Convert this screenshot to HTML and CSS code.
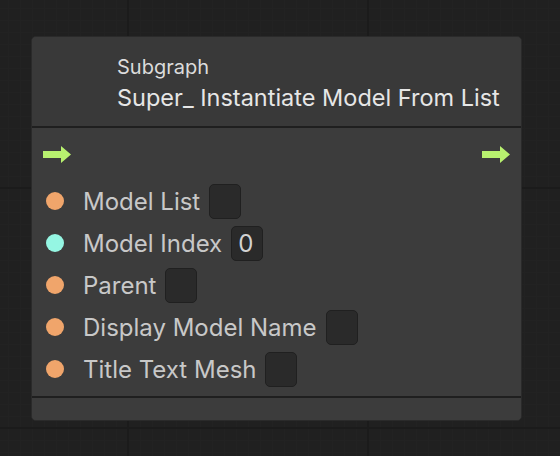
FILE: index.html
```html
<!DOCTYPE html>
<html>
<head>
<meta charset="utf-8">
<link rel="stylesheet" href="styles.css">
</head>
<body>
<div class="canvas">
  <div class="node">
    <div class="header">
      <div class="kind">Subgraph</div>
      <div class="title">Super_ Instantiate Model From List</div>
    </div>
    <div class="sep"></div>
    <div class="body">
      <div class="flow">
        <svg class="arrow" width="28" height="17" viewBox="0 0 28 17"><polygon points="0,5 18,5 18,0 28,8.5 18,17 18,12 0,12"/></svg>
        <svg class="arrow" width="28" height="17" viewBox="0 0 28 17"><polygon points="0,5 18,5 18,0 28,8.5 18,17 18,12 0,12"/></svg>
      </div>
      <div class="port"><span class="dot obj"></span><span class="label">Model List</span><span class="field"></span></div>
      <div class="port"><span class="dot num"></span><span class="label">Model Index</span><span class="field">0</span></div>
      <div class="port"><span class="dot obj"></span><span class="label">Parent</span><span class="field"></span></div>
      <div class="port"><span class="dot obj"></span><span class="label">Display Model Name</span><span class="field"></span></div>
      <div class="port"><span class="dot obj"></span><span class="label">Title Text Mesh</span><span class="field"></span></div>
    </div>
    <div class="sep"></div>
    <div class="footer"></div>
  </div>
</div>
</body>
</html>
```
FILE: styles.css
```css
html, body {
  margin: 0;
  padding: 0;
}
body {
  width: 560px;
  height: 456px;
  overflow: hidden;
  background-color: #202020;
  background-image:
    linear-gradient(to right, #1b1b1b 0, #1b1b1b 2px, transparent 2px),
    linear-gradient(to bottom, #1b1b1b 0, #1b1b1b 2px, transparent 2px),
    linear-gradient(to right, #222222 0, #222222 1px, transparent 1px),
    linear-gradient(to bottom, #222222 0, #222222 1px, transparent 1px);
  background-size: 240px 240px, 240px 240px, 12px 12px, 12px 12px;
  background-position: 127px 0, 0 187px, 8px 0, 0 8px;
  font-family: Inter, "Noto Sans", sans-serif;
}
.canvas {
  padding: 36px 0 0 31px;
}
.node {
  box-sizing: border-box;
  width: 491px;
  height: 385px;
  background: #3c3c3c;
  border: 1px solid #2a2a2a;
  border-radius: 5px;
  display: flex;
  flex-direction: column;
  overflow: hidden;
}
.header {
  height: 89px;
  background: #393939;
  display: flex;
  flex-direction: column;
  padding-left: 85px;
  padding-top: 18px;
  box-sizing: border-box;
}
.kind {
  font-size: 20px;
  line-height: 24px;
  color: #dcdcdc;
}
.title {
  font-size: 23.5px;
  line-height: 32px;
  margin-top: 3px;
  color: #e6e6e6;
}
.sep {
  height: 2px;
  background: #1f1f1f;
}
.body {
  height: 268px;
  display: flex;
  flex-direction: column;
}
.flow {
  height: 52px;
  display: flex;
  align-items: center;
  justify-content: space-between;
  padding: 0 11px;
}
.arrow {
  fill: #b8f16f;
  display: block;
}
.port {
  height: 42px;
  display: flex;
  align-items: center;
  padding-left: 14px;
}
.dot {
  width: 18px;
  height: 18px;
  border-radius: 50%;
  margin-right: 19px;
  flex: none;
}
.dot.obj { background: #f0a56b; }
.dot.num { background: #95f6e3; }
.label {
  font-size: 24px;
  color: #c8c8c8;
  margin-right: 9px;
  white-space: nowrap;
}
.field {
  box-sizing: border-box;
  width: 32px;
  height: 35px;
  background: #2a2a2a;
  border: 1px solid #202020;
  border-radius: 5px;
  font-size: 24px;
  line-height: 33px;
  color: #d2d2d2;
  padding-left: 6px;
}
.footer {
  flex: 1;
  background: #3c3c3c;
}
```
